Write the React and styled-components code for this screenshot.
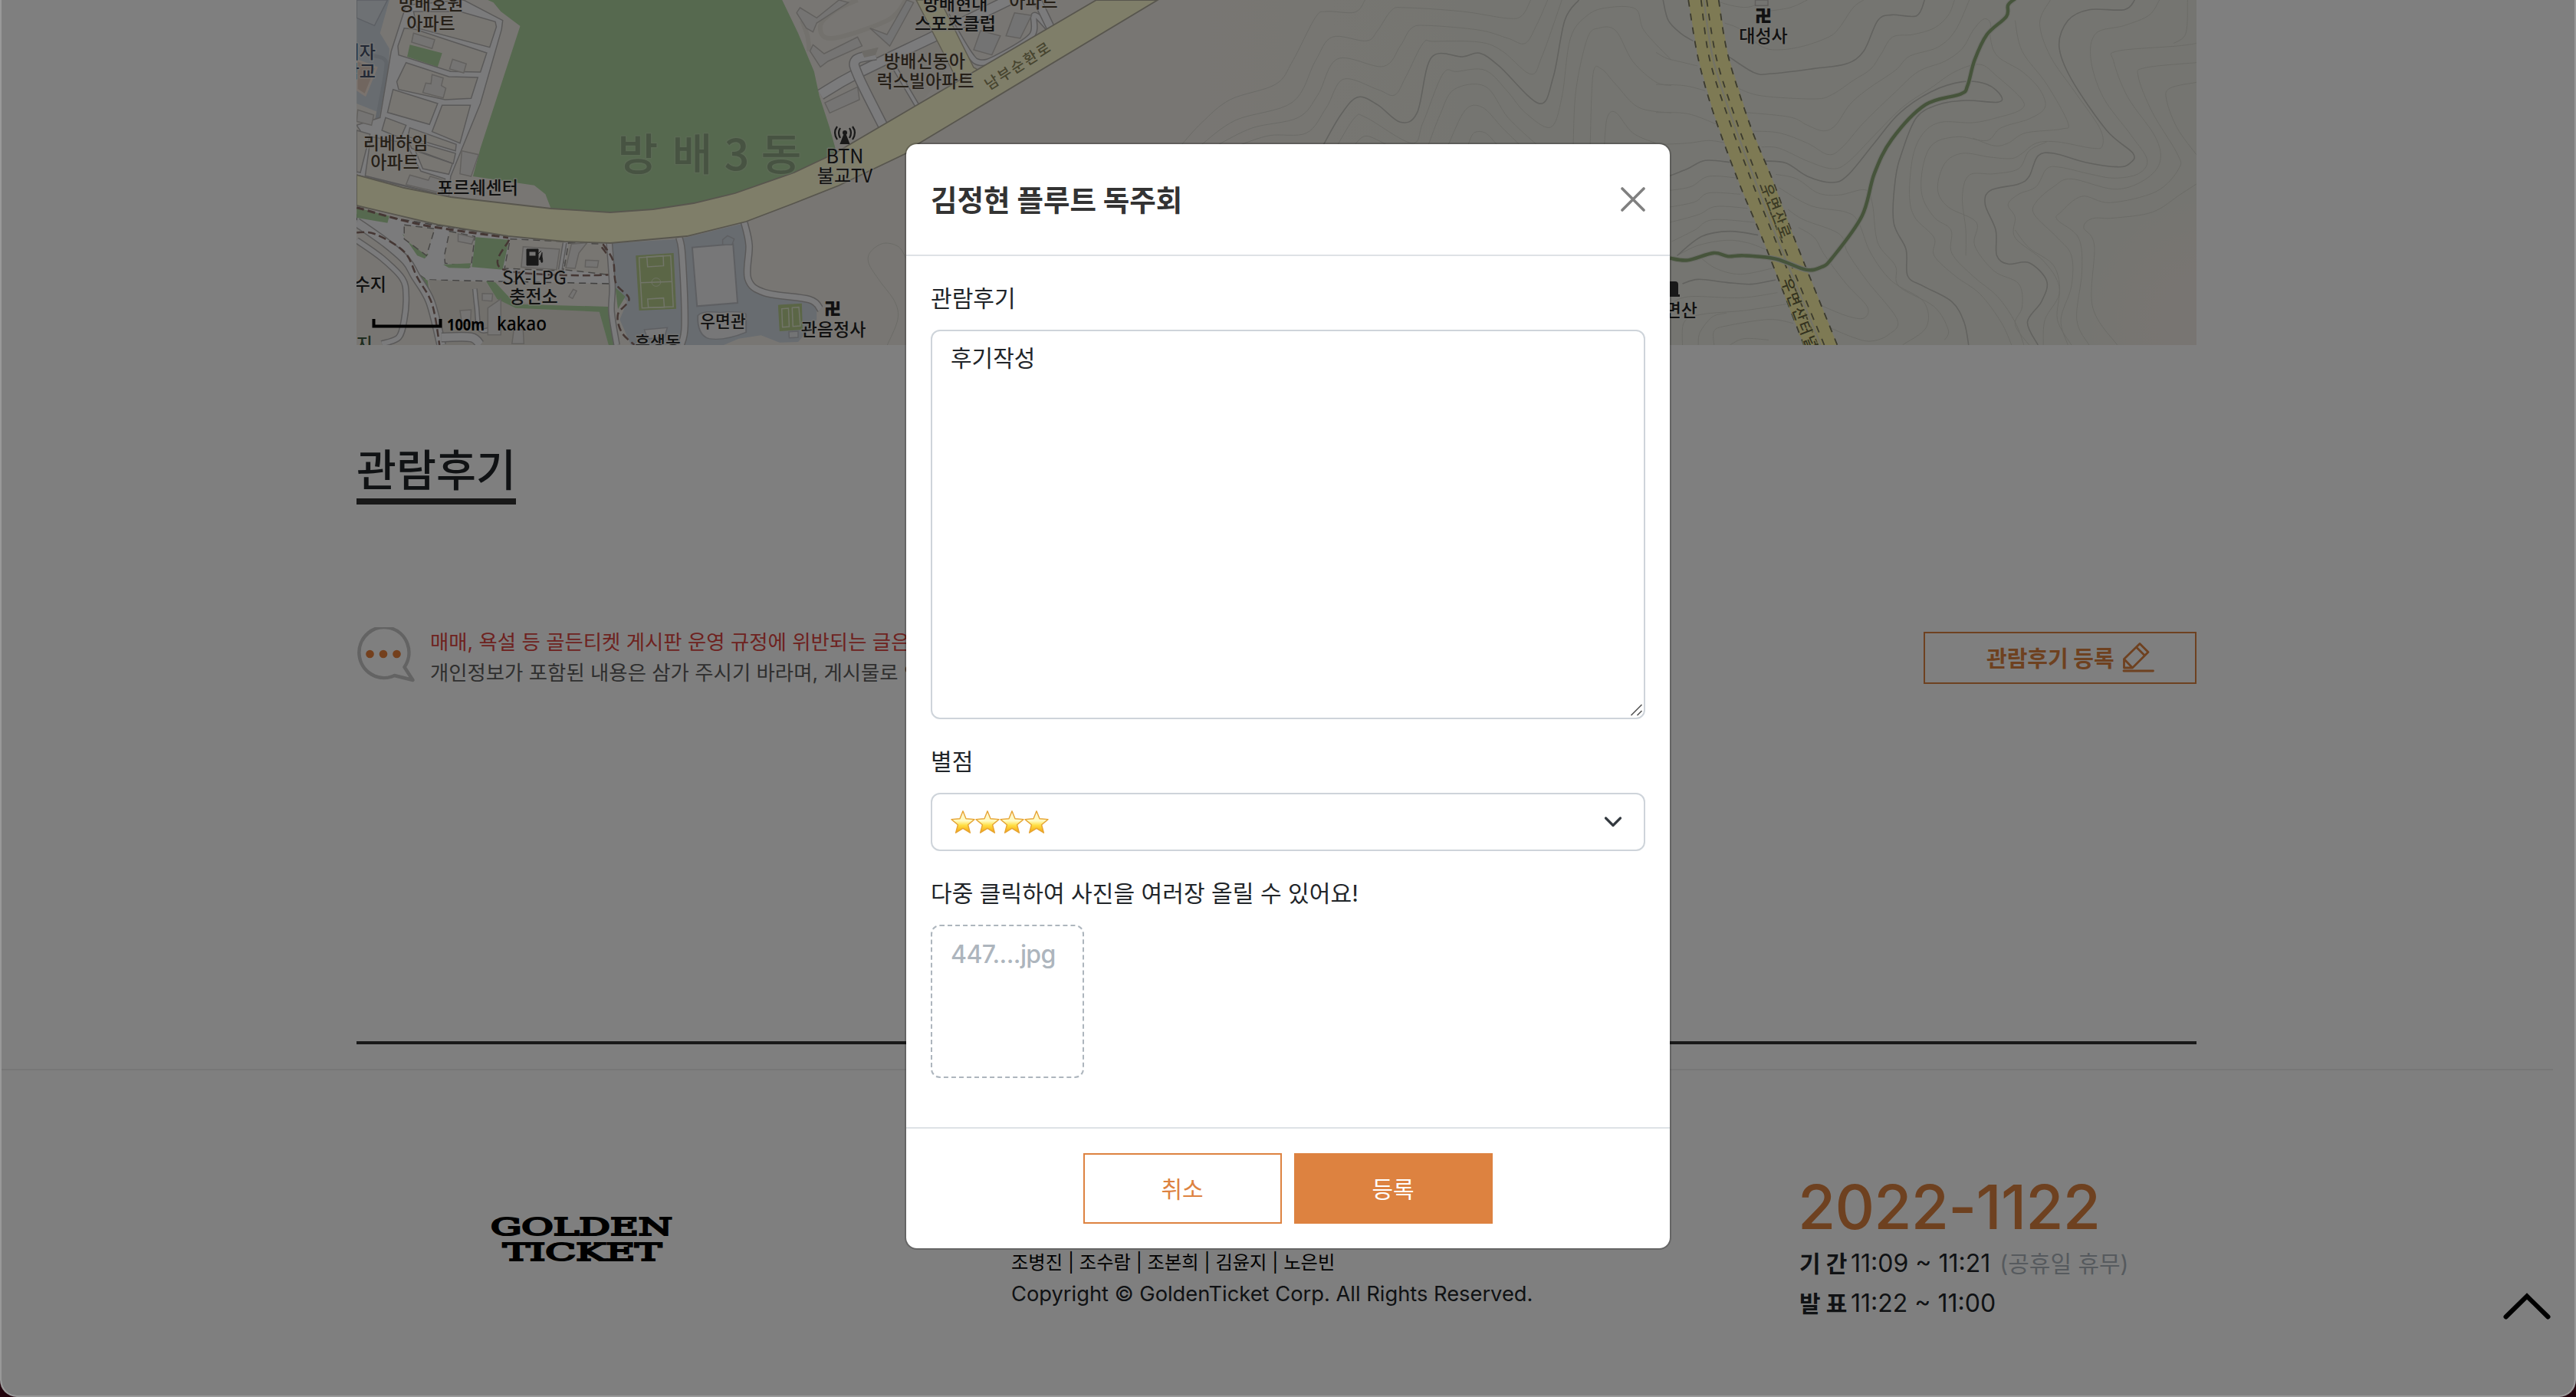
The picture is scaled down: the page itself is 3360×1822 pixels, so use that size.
import React from "react";
import styled, { createGlobalStyle } from "styled-components";

const GlobalStyle = createGlobalStyle`
  * { box-sizing: border-box; }
  body {
    margin: 0;
    background: #22030c;
    color: #212529;
    font-family: Inter, "Noto Sans CJK KR", sans-serif;
    overflow: hidden;
  }
`;

const ORANGE = "#dd8240";

/* ---------- window and page ---------- */

const Window = styled.div`
  position: relative;
  width: 3360px;
  height: 1822px;
  border: 2px solid #999;
  border-top: 0;
  border-radius: 0 0 22px 22px;
  overflow: hidden;
  background: #fff;
`;

const Page = styled.div`
  width: 3328px;
  height: 1820px;
  display: flex;
  flex-direction: column;
`;

const Content = styled.main`
  width: 2400px;
  margin-left: 463px;
  height: 1362px;
  display: flex;
  flex-direction: column;
  border-bottom: 4px solid #333;
`;

const Map = styled.svg`
  display: block;
  flex: none;
  width: 2400px;
  height: 450px;
  font-family: "Noto Sans CJK KR", sans-serif;
`;

const SectionTitle = styled.h3`
  align-self: flex-start;
  margin: 122px 0 0;
  height: 86px;
  width: 208px;
  border-bottom: 8px solid #333;
  font-size: 56.5px;
  line-height: 84px;
  font-weight: 500;
  white-space: nowrap;
`;

const NoticeRow = styled.div`
  display: flex;
  margin-top: 160px;
  height: 76px;
`;

const BubbleIcon = styled.svg`
  flex: none;
  width: 80px;
  height: 72px;
`;

const NoticeText = styled.div`
  flex: 1;
  margin: -1px 0 0 16px;
  font-size: 26.4px;
  line-height: 40px;
  white-space: nowrap;
  overflow: hidden;
`;

const NoticeLine = styled.div`
  color: ${(p) => (p.$warn ? "#dc4440" : "#5e5e5e")};
`;

const WriteButton = styled.button`
  flex: none;
  display: flex;
  align-items: center;
  justify-content: flex-start;
  gap: 10px;
  margin: 6px 0 0;
  width: 356px;
  height: 68px;
  padding: 0 0 2px 80px;
  border: 2.5px solid ${ORANGE};
  background: transparent;
  color: ${ORANGE};
  font-family: "Noto Sans CJK KR", sans-serif;
  font-size: 29px;
  font-weight: 700;
  white-space: nowrap;
`;

/* ---------- footer ---------- */

const Footer = styled.footer`
  margin-top: 32px;
  height: 426px;
  border-top: 2px solid #eee;
  display: flex;
`;

const Logo = styled.svg`
  flex: none;
  width: 250px;
  height: 70px;
  margin: 188px 0 0 631px;
  font-family: "DejaVu Serif", serif;
  font-weight: 400;
  stroke: #000;
  stroke-width: 2.2px;
`;

const Credits = styled.div`
  width: 700px;
  margin: 231px 0 0 436px;
  white-space: nowrap;
`;

const CreditNames = styled.p`
  margin: 0;
  height: 40px;
  line-height: 39px;
  font-size: 24.3px;
  color: #000;
`;

const Copyright = styled.p`
  margin: 0;
  line-height: 42px;
  font-size: 27.3px;
`;

const Schedule = styled.div`
  margin: 124px 0 0 328px;
  white-space: nowrap;
`;

const ScheduleCode = styled.div`
  height: 102px;
  line-height: 107px;
  margin-left: -2px;
  font-size: 80px;
  font-weight: 500;
  letter-spacing: -0.8px;
  color: ${ORANGE};
`;

const ScheduleRow = styled.div`
  display: flex;
  height: 52px;
  line-height: 52px;
  font-size: 32px;
`;

const ScheduleLabel = styled.b`
  width: 67px;
  font-size: 30px;
`;

const ScheduleNote = styled.span`
  margin-left: 12px;
  font-size: 30px;
  color: #adb5bd;
`;

const TopArrow = styled.svg`
  position: absolute;
  left: 3262px;
  top: 1683px;
  width: 64px;
  height: 42px;
`;

/* ---------- modal ---------- */

const Backdrop = styled.div`
  position: absolute;
  inset: 0;
  display: flex;
  justify-content: center;
  align-items: flex-start;
  padding-top: 186px;
  background: rgba(0, 0, 0, 0.5);
`;

const Dialog = styled.section`
  width: 1000px;
  height: 1444px;
  display: flex;
  flex-direction: column;
  background: #fff;
  background-clip: padding-box;
  border: 2px solid rgba(0, 0, 0, 0.2);
  border-radius: 16px;
`;

const DialogHeader = styled.header`
  display: flex;
  align-items: center;
  justify-content: space-between;
  height: 146px;
  padding: 0 32px;
  border-bottom: 2px solid #dee2e6;
`;

const DialogTitle = styled.h5`
  margin: 0 0 3px;
  font-size: 37.5px;
  font-weight: 700;
  color: #333;
`;

const DialogBody = styled.div`
  flex: 1;
  padding: 32px;
`;

const Label = styled.label`
  display: block;
  height: 48px;
  margin-bottom: 16px;
  font-size: 30.1px;
  line-height: 47px;
`;

const Field = styled.div`
  position: relative;
  height: ${(p) => p.$height}px;
  margin-bottom: 32px;
`;

const TextArea = styled.textarea`
  display: block;
  width: 100%;
  height: 100%;
  padding: 11px 24px;
  border: 2px solid #ced4da;
  border-radius: 12px;
  resize: none;
  outline: none;
  color: #212529;
  font-family: inherit;
  font-size: 30px;
  line-height: 48px;
`;

const Grip = styled.svg`
  position: absolute;
  right: 2px;
  bottom: 2px;
  width: 18px;
  height: 18px;
`;

const Select = styled.div`
  display: flex;
  align-items: center;
  justify-content: space-between;
  height: 100%;
  padding: 0 27px 0 24px;
  border: 2px solid #ced4da;
  border-radius: 12px;
`;

const Stars = styled.span`
  display: flex;
`;

const FileBox = styled.div`
  width: 200px;
  height: 200px;
  padding: 13px 24px;
  border: 2px dashed #adb5bd;
  border-radius: 12px;
  color: #adb5bd;
  font-size: 32px;
  font-weight: 500;
  line-height: 48px;
  letter-spacing: -0.6px;
`;

const DialogFooter = styled.footer`
  display: flex;
  justify-content: center;
  gap: 16px;
  height: 158px;
  padding: 32px;
  border-top: 2px solid #dee2e6;
`;

const ActionButton = styled.button`
  width: 259px;
  height: 92px;
  padding: 0 1px 3px 0;
  border: 2px solid ${ORANGE};
  background: ${(p) => (p.$primary ? ORANGE : "#fff")};
  color: ${(p) => (p.$primary ? "#fff" : ORANGE)};
  font-family: inherit;
  font-size: 30px;
`;

/* ---------- map ---------- */

// Catmull-Rom curve through a flat list of x,y pairs.
function smooth(str) {
  const n = str.trim().split(/[\s,]+/).map(Number);
  const p = [];
  for (let i = 0; i < n.length; i += 2) p.push([n[i], n[i + 1]]);
  let d = `M${p[0]}`;
  for (let i = 0; i < p.length - 1; i++) {
    const a = p[i - 1] || p[i];
    const b = p[i];
    const c = p[i + 1];
    const e = p[i + 2] || c;
    d += `C${b[0] + (c[0] - a[0]) / 6},${b[1] + (c[1] - a[1]) / 6} ${c[0] - (e[0] - b[0]) / 6},${c[1] - (e[1] - b[1]) / 6} ${c[0]},${c[1]}`;
  }
  return d;
}

const Line = ({ d, w = 1, c = "#d6d6ce", dash, o }) => (
  <path d={smooth(d)} fill="none" stroke={c} strokeWidth={w} strokeDasharray={dash} opacity={o} vectorEffect="non-scaling-stroke" strokeLinejoin="round" />
);

const Road = ({ d, w }) => (
  <>
    <Line d={d} w={w} c="#b5b3b2" />
    <Line d={d} w={w - 3} c="#f6f6f8" />
  </>
);

const Shape = ({ p, fill = "#f1ede5", stroke = "none", w = 1.5, dash }) => (
  <polygon points={p} fill={fill} stroke={stroke} strokeWidth={w} strokeDasharray={dash} vectorEffect="non-scaling-stroke" />
);

const Name = ({ x, y, size = 23, fill = "#222", anchor = "middle", halo = "#f4f2ec", weight = 500, ...rest }) => (
  <text x={x} y={y} fontSize={size} fill={fill} textAnchor={anchor} fontWeight={weight} stroke={halo} strokeWidth="3" strokeOpacity=".6" strokeLinejoin="round" paintOrder="stroke" {...rest} />
);

const PARK = "#acd29e";
const ROAD = "#fffcd2";
const CAMPUS = "#d0d8e1";

const westBlocks = [
  "205,45 330,45 425,85 428,105 410,185 215,110",
  "180,110 210,115 402,207 385,282 305,280 165,215 163,180",
  "185,245 300,300 378,303 360,385 290,390 165,350 160,320",
  "150,350 270,405 248,487 135,440",
  "282,412 358,412 330,560 255,515",
  "130,460 185,490 170,540 120,510",
  "195,500 320,565 318,590 190,535",
  "188,545 318,600 312,640 200,580",
  "210,590 310,640 300,682 230,660",
  "90,535 185,560 225,670 290,700 282,762 75,688",
  "52,510 88,525 62,675 52,672",
];

const buildings = [
  "205,130 262,155 255,190 200,165",
  "310,232 347,250 340,285 302,270",
  "255,292 285,305 280,335 292,345 285,383 230,362 238,325 252,328",
  "195,685 245,705 250,690 285,705 280,755 185,722",
  "335,590 380,605 360,690 330,680",
  "55,430 98,450 92,490 52,475",
  "1245,30 1290,70 1350,0 1375,10 1290,90 1280,125 1262,110 1236,50",
  "1280,175 1310,210 1400,145 1412,180 1320,240 1300,262 1272,200",
  "1400,340 1405,390 1325,442 1312,402",
  "325,915 368,930 362,955 325,945",
  "500,965 598,975 590,1055 495,1045",
  "630,955 672,950 650,990 640,1050 615,1048",
  "668,1018 703,1020 700,1046 667,1044",
  "635,1132 644,1138 633,1168 623,1160",
  "390,1148 418,1150 416,1178 390,1175",
  "330,1215 360,1212 358,1270 335,1262",
  "405,1205 440,1170 440,1310 405,1310",
  "475,1290 500,1290 502,1345 470,1345",
];

const westBlocksSouth = [
  "180,880 262,895 240,1000 180,935",
  "302,905 370,925 360,1045 290,1030 288,1000",
  "465,935 610,945 608,1060 450,1050",
  "622,950 715,955 735,1020 730,1075 610,1055",
];

// Contours of the eastern hill, in the east sheet's own grid.
const eastContours = [
  "0,205 30,228 70,242 118,258", "195,90 240,115 300,182 350,195 420,180 490,145 520,110 560,30 590,0", "165,0 210,20 262,28 310,0",
  "310,45 380,30 430,0", "0,330 80,335 140,355", "232,345 300,375 450,387 500,370 560,315 610,270 640,210 672,145 730,135 790,110 830,60 848,0",
  "0,440 90,445 170,485", "255,440 380,458 430,490 475,512 510,490 550,410 600,350 680,275 720,220 800,185 850,120 890,0",
  "270,513 350,520 430,560 490,605 530,575 590,480 680,360 745,280 820,240 870,190 900,120 930,75 950,90 950,150 970,220 1040,280 1090,350 1105,420 1060,465 980,500 940,550 860,535 790,560 760,640 755,760 790,850 838,900 840,990 900,1080 970,1160 1020,1260 1045,1350",
  "0,566 90,560 150,550 200,560", "300,575 350,580 430,630 500,660 545,635 620,530 700,420 780,345 850,280 920,252 970,300 1040,390 1035,430 970,460 900,480 810,478 760,520 730,610 720,760 735,850 790,930 790,1000 850,1080 920,1150 980,1260 1010,1350",
  "40,745 100,730 150,690 240,698", "340,682 400,700 460,755 520,763 595,743 615,800 630,950 680,1040 690,1120 790,1200 830,1290 820,1330",
  "40,810 110,790 150,755 240,760", "350,735 440,805 540,830 575,870 610,990 670,1100 760,1180 768,1280 700,1350",
  "40,870 120,840 170,808 260,815", "375,820 420,860 520,915 545,990 600,1100 685,1250 660,1310 610,1335 560,1320 490,1280",
  "45,945 110,900 160,860 280,870", "405,890 450,930 480,1000 540,1110 600,1200 590,1245 540,1235 460,1190",
  "60,1000 120,960 200,940 260,950 310,975", "120,1000 170,1050 240,1073 330,1050", "50,1180 100,1160 240,1165 345,1145",
  "75,1350 80,1260 130,1230 250,1215 370,1190", "120,1350 125,1300 160,1240 200,1225", "165,1350 165,1295 200,1275 320,1250 390,1265", "210,1350 250,1325 320,1330",
  "1120,0 1090,90 1120,220 1190,360 1260,500 1268,570 1240,580 1140,555 1080,560 1040,600 1010,620 950,615 870,600 820,640 800,740 830,810 910,870 905,960 960,1060 1030,1110 1040,1200 1020,1270 1060,1350",
  "1020,80 1040,200 1110,330 1170,480 1150,505 1050,520 1000,560 960,570 900,540",
  "1180,1350 1140,1250 1145,1120 1100,1020 1020,930 1020,850 1000,800 1030,760 1080,730 1110,660 1150,655 1230,680 1300,697 1370,680 1395,625 1350,530 1270,380 1235,230 1250,130 1330,100 1400,60 1430,0",
  "1100,1350 1105,1250 1145,1150 1130,1040 1060,970 1020,900", "880,1000 880,900 870,770 890,685 960,680 1030,660 1060,590 1110,555",
  "1535,170 1480,180 1310,200 1300,240 1340,380 1420,540 1430,640 1380,710 1300,740 1180,700 1130,730 1080,790 1075,840 1140,930 1180,1000 1180,1120 1150,1250 1170,1350",
  "1535,245 1390,265 1370,300 1410,440 1480,600 1485,660 1420,750 1290,793 1210,768 1150,830 1140,860 1200,930 1210,1060 1195,1250 1230,1350",
  "1535,322 1460,345 1450,390 1480,500 1535,605", "1535,720 1490,760 1410,830 1300,853 1240,855 1215,890 1245,960 1240,1200 1310,1350", "1510,0 1505,130 1470,170",
];

const eastMajorContours = [
  "20,0 35,80 70,130 105,160", "205,220 280,285 330,288 450,268 540,250 590,200 630,80 670,58 740,62 763,0",
  "40,688 90,660 140,628 210,635", "310,630 370,638 430,690 500,714 545,685 620,560 690,445 780,360 870,320 940,330 980,375 970,400 880,393 800,410 740,460 700,590 680,700 675,870 710,975 715,1080 760,1120 840,1180 875,1260 888,1350",
  "1360,0 1330,38 1230,38 1170,80 1145,180 1180,310 1280,510 1355,600 1345,640 1310,653 1220,635 1130,600 1085,610 1060,690 1030,720 950,745 935,800 965,900 968,1000 1000,1033 1060,1028 1110,1100 1095,1180 1055,1260 1085,1350",
  "60,1000 130,925 210,905 290,920", "75,1110 120,1093 200,1105 270,1112 340,1095",
];

const midContours = [
  "705,565 740,480 790,390 870,330 900,240 940,70 960,45 1010,48 1028,0", "740,565 800,470 900,400 940,240 970,145 1030,160 1050,120 1075,40 1100,30 1200,45 1280,72 1305,60 1320,0",
  "770,565 830,500 910,460 945,370 980,230 1060,260 1090,180 1110,110 1140,100 1230,118 1280,150 1310,170 1330,100 1350,0",
  "810,565 860,530 925,520 960,420 990,310 1050,350 1080,372 1100,300 1130,170 1150,162 1230,165 1270,200 1320,290 1340,220 1375,0",
  "980,565 1010,460 1030,460 1110,560 1130,480 1165,290 1190,280 1240,275 1280,360 1310,440 1355,498 1375,380 1390,150 1420,60 1455,30 1505,35 1520,120 1568,235",
  "1010,565 1030,532 1065,565", "1140,565 1160,450 1185,350 1240,338 1280,460 1330,565", "1175,565 1205,430 1235,420 1270,500 1300,565", "1210,565 1220,520 1240,520 1260,565",
  "1395,565 1400,350 1420,150 1440,110 1470,120 1500,240 1540,320 1568,335", "1425,565 1430,290 1445,270 1470,330 1510,420 1568,442", "1450,565 1455,460 1470,440 1500,520 1540,560",
];

function KakaoMap() {
  return (
    <Map viewBox="0 0 2400 450">
      <defs>
        <linearGradient id="hill" x1="0" x2="1">
          <stop offset="0" stopColor="#f1ede6" />
          <stop offset=".46" stopColor="#f1ede6" />
          <stop offset=".6" stopColor="#ebebe2" />
          <stop offset="1" stopColor="#ebebe2" />
        </linearGradient>
        <radialGradient id="warm">
          <stop offset=".4" stopColor="#f1ebe4" />
          <stop offset="1" stopColor="#f1ebe4" stopOpacity="0" />
        </radialGradient>
      </defs>
      <rect width="2400" height="450" fill="url(#hill)" />
      <circle cx="2420" cy="420" r="160" fill="url(#warm)" />

      {/* west sheet */}
      <g transform="translate(-25 0) scale(.4847 .33333)">
        <Shape p="52,0 140,0 115,130 140,190 138,300 112,440 52,405" fill={CAMPUS} />
        <Shape p="52,0 135,0 100,100 52,70" fill="#dde2e8" stroke="#b9bfc8" />
        <Shape p="52,235 105,265 75,372 52,350" fill="#e2cdbf" stroke="#f4e6dc" w={3} />
        <Line d="80,215 125,230 130,280 105,480" w={5} c="#c3cbd3" />
        <Shape p="185,20 340,0 445,80 442,115 385,405 305,690 300,768 50,684 75,540 52,490 115,460 145,200" fill="#f6f6f8" stroke="#b5b3b2" />
        {westBlocks.map((p) => <Shape key={p} p={p} stroke="#b5b3b2" />)}
        <Shape p="195,175 282,208 270,262 188,222" fill={PARK} />
        <Shape p="405,0 420,10 440,45 492,102 385,580 365,690 530,725 560,760 575,817 735,832 850,822 960,797 1070,757 1230,676 1345,605 1325,500 1297,375 1283,280 1240,130 1197,0" fill={PARK} />
        <Line d="1250,80 1265,140 1270,200" w={6} c="#e6e2da" />
        <Line d="1530,0 1480,80 1330,150 1300,100 1340,40 1400,0" w={6} c="#e6e2da" />

        <Shape p="52,840 140,850 262,880 460,925 735,950 745,1070 735,1110 240,1095 205,1060 140,950 52,870" fill="#f6f6f8" stroke="#7f7d7c" dash="9 6" />
        <Shape p="52,812 140,845 135,872 52,852" fill={PARK} />
        <Shape p="175,915 245,995 235,1012 215,1000" fill={PARK} />
        {westBlocksSouth.map((p) => <Shape key={p} p={p} stroke="#8f8c89" dash="9 6" />)}
        <Shape p="372,928 462,938 445,1055 362,1045" fill={PARK} />
        <Shape p="285,1035 360,1030 355,1050 300,1048" fill={PARK} />
        <Shape p="245,1095 400,1105 430,1170 705,1220 730,1350 285,1350" fill="#e4e0d8" />
        <Shape p="205,1058 243,1098 252,1190 280,1350 262,1290 230,1150" fill={PARK} />
        <Shape p="400,1100 425,1105 480,1190 730,1200 755,1350 730,1350 705,1220 480,1205 430,1170" fill={PARK} />
        <Line d="52,812 230,880 460,930" w={3} c="#8a6f68" dash="10 5" />
        <Line d="462,938 448,1055 730,1075 735,1020 705,955" w={2.5} c="#8a6f68" dash="10 5" />
        <Road d="52,870 130,950 185,1020 210,1080 250,1180 280,1350" w={13} />
        <Line d="52,910 100,915 180,985 215,1085 255,1190 275,1350" w={2.5} c="#8a6f68" dash="10 5" />
        <Road d="52,940 120,1010 175,1090 185,1160 180,1250 165,1320 120,1345" w={9} />
        <Road d="280,1320 360,1320 385,1350" w={13} />
        <Road d="370,1130 375,1200 385,1290 430,1280" w={7} />
        <Road d="612,950 600,1055" w={6} />

        <Shape p="738,952 920,935 1090,875 1100,960 1108,1120 1150,1160 1290,1185 1290,1250 1240,1338 1190,1340 1140,1312 1080,1325 1040,1350 790,1350 760,1250 780,1180 750,1130" fill={CAMPUS} />
        <Shape p="748,1125 775,1160 755,1210" fill={PARK} />
        <Road d="732,950 740,1120 738,1220 752,1350" w={9} />
        <Line d="715,955 742,1020 750,1110 785,1170 755,1230 765,1300 800,1350" w={2.5} c="#8a6f68" dash="10 5" />
        <Road d="920,930 928,1000 935,1270 925,1350" w={10} />
        <Road d="1095,870 1108,960 1105,1090 1150,1145 1270,1172 1300,1210" w={10} />
        <Shape p="803,1000 905,990 912,1208 812,1215" fill="#b6cc8c" />
        <Shape p="812,1008 897,1000 904,1200 820,1205" fill="none" stroke="#e4ead2" />
        <Shape p="833,1005 877,1001 878,1040 835,1044" fill="none" stroke="#e4ead2" />
        <Shape p="835,1170 878,1166 880,1202 837,1204" fill="none" stroke="#e4ead2" />
        <Line d="815,1106 901,1102" w={1.5} c="#e4ead2" />
        <ellipse cx="858" cy="1104" rx="12" ry="16" fill="none" stroke="#e4ead2" strokeWidth="2" />
        <Shape p="955,968 1065,955 1077,1185 968,1198" fill="#eeeef0" stroke="#bcbfc4" w={2} />
        <Shape p="1037,938 1050,922 1068,935 1062,958 1037,958" fill={CAMPUS} stroke="#bcbfc4" />
        <path d="M970,1235Q980,1215 1030,1222Q1095,1215 1100,1230L1100,1300Q1040,1335 1000,1325Q968,1310 970,1235Z" fill="#eeeef0" stroke="#bcbfc4" strokeWidth="4" />
        <Shape p="1186,1193 1250,1187 1252,1290 1190,1296" fill="#b6cc8c" />
        <Shape p="1196,1208 1214,1206 1216,1278 1198,1280" fill="none" stroke="#e4ead2" />
        <Shape p="1224,1204 1242,1202 1246,1275 1226,1277" fill="none" stroke="#e4ead2" />
        <Shape p="1215,1298 1240,1296 1240,1320 1216,1322" fill="#e6e8ea" stroke="#bcbfc4" />
        <Shape p="826,1290 888,1282 880,1320 835,1325" fill="#eeeef0" stroke="#bcbfc4" />
        {buildings.map((p) => <Shape key={p} p={p} fill="#ebe9e6" stroke="#c4c1bd" />)}
        <Line d="1530,1010 1510,965 1470,952 1435,985 1430,1030 1460,1100 1500,1180 1508,1250 1480,1350" />
      </g>

      {/* central sheet */}
      <g transform="translate(555 0) scale(.7398 .33333)">
        <Shape p="130,300 290,130 300,240 240,420 180,500" fill="#ece8e0" />
        <Road d="68,370 130,290 275,135 400,0" w={15} />
        <Road d="165,215 130,235 135,300 180,500" w={14} />
        <Road d="200,270 240,420" w={7} />
        <Road d="290,60 330,210 350,245 380,225 440,140 445,60 470,110" w={9} />
        <Road d="450,0 475,115" w={12} />
        <Shape p="410,50 440,60 420,150 395,140" fill="#e6e6e6" stroke="#c4c1bd" />
        <Shape p="350,120 385,140 370,215 338,195" fill="#e6e6e6" stroke="#c4c1bd" />
        <Shape p="155,110 185,135 220,0 232,10 205,120 190,180" fill="#e6e6e6" stroke="#c4c1bd" />
        <Shape p="140,200 170,185 165,215 145,225" fill="#dad6ce" />
      </g>
      <path d="M730,0H761L805,88L824,99L790,118L766,70Z" fill={ROAD} stroke="#bbb6a0" strokeWidth="1.5" />
      <path
        d="M0,228L62,245L123,257L254,272L331,277L387,273L440,265L494,252L571,225L624,200L644,188L965,0H1045L732,188L717,200L629,242L571,265L508,289L431,308L331,317L271,315L198,308L106,293L0,268Z"
        fill={ROAD}
        stroke="#b0ac9c"
        strokeWidth="1.8"
      />
      <g transform="translate(555 0) scale(.7398 .33333)">
        {midContours.map((d) => <Line key={d} d={d} />)}
        <Line d="955,565 985,450 1015,380 1050,410 1090,478 1120,440 1145,225 1200,222 1230,208 1265,260 1335,405 1360,300 1380,80 1405,0" w={1.6} c="#c4c4be" />
      </g>

      {/* east sheet */}
      <g transform="translate(1695 0) scale(.4592 .33333)">
        {eastContours.map((d) => <Line key={d} d={d} />)}
        {eastMajorContours.map((d) => <Line key={d} d={d} w={1.6} c="#c4c4be" />)}
        <Shape p="92,0 120,230 165,450 240,730 310,960 420,1350 515,1350 395,940 330,700 270,500 205,220 178,0" fill="#fcf5a8" />
        <Line d="136,0 162,230 215,460 285,720 352,960 468,1350" w={2.4} c="#e8e6cc" />
        {["92,0 120,230 165,450 240,730 310,960 420,1350", "178,0 205,220 270,500 330,700 395,940 515,1350", "128,0 152,230 205,460 275,720 345,960 460,1350", "144,0 172,230 225,460 295,720 362,960 478,1350"].map((d) => (
          <Line key={d} d={d} w={1.8} c="#77755c" dash="9 9" />
        ))}
        <Shape p="282,0 318,0 318,22 282,22" fill="#e8e8e2" stroke="#c4c1bd" />
        {[["#dcded4", 7], ["#8ca876", 4.4]].map(([c, w]) => (
          <Line key={c} w={w} c={c} d="1020,-5 1000,20 995,65 940,135 905,235 885,335 865,368 765,410 670,545 620,680 585,845 500,1010 470,1045 425,1055 340,1013 250,1000 205,1003 163,990 90,1018 40,1010" />
        ))}
      </g>

      {/* place names */}
      <Name x="97" y="13" fill="#4d4030">방배호원</Name>
      <Name x="97" y="39" fill="#4d4030">아파트</Name>
      <Name x="25" y="76" fill="#44516a" anchor="end">여자</Name>
      <Name x="25" y="101" fill="#44516a" anchor="end">학교</Name>
      <Name x="51" y="195" fill="#4d4030">리베하임</Name>
      <Name x="50" y="220" fill="#4d4030">아파트</Name>
      <Name x="158" y="253">포르쉐센터</Name>
      {[["방", 367], ["배", 438], ["3", 496], ["동", 554]].map(([t, x]) => (
        <Name key={t} x={x} y="222" size="57" weight="500" fill="#8ea684" halo="#bcd6b0">{t}</Name>
      ))}
      <Name x="637" y="213" size="25" weight="400">BTN</Name>
      <Name x="637" y="238" size="24" weight="400">불교TV</Name>
      <g fill="none" stroke="#333" strokeWidth="2.2">
        <path d="M631,167Q627,173 631,180M643,167Q647,173 643,180M627,165Q621,173 627,182M647,165Q653,173 647,182" />
        <path d="M637,174L632,187H642Z" fill="#333" />
        <circle cx="637" cy="173" r="3" fill="#333" stroke="none" />
      </g>
      <path d="M222,325H237V346H222ZM225,328V334H234V328ZM237,331L241,327M238,338Q241,338 241,342Q244,344 242,335V329" fill="#333" fillRule="evenodd" stroke="#333" />
      <Name x="232" y="371" size="24.5" weight="400">SK-LPG</Name>
      <Name x="231" y="395">충전소</Name>
      <Name x="39" y="379" anchor="end">수지</Name>
      <Name x="21" y="457" anchor="end" fill="#3f5a40">지</Name>
      <Name x="478" y="427" size="21.5">우면관</Name>
      <Name x="393" y="454" size="21.5">후생동</Name>
      <Name x="622" y="438">관음정사</Name>
      <Name x="621" y="410" size="21" weight="700" fill="#222" stroke="#222" strokeWidth="1.2" strokeOpacity="1">卍</Name>
      <Name x="781" y="13">방배현대</Name>
      <Name x="781" y="39">스포츠클럽</Name>
      <Name x="883" y="10" fill="#4d4030">아파트</Name>
      <Name x="741" y="88" fill="#4d4030">방배신동아</Name>
      <Name x="742" y="114" fill="#4d4030">럭스빌아파트</Name>
      <Name x="0" y="0" size="19" anchor="start" fill="#8f8a5f" halo={ROAD} letterSpacing="2.4" transform="translate(825 118) rotate(-32.5)">남부순환로</Name>
      <Name x="1835" y="55">대성사</Name>
      <Name x="1835" y="28" size="21" weight="700" fill="#222" stroke="#222" strokeWidth="1.2" strokeOpacity="1">卍</Name>
      <Name x="1749" y="413" anchor="end">우면산</Name>
      <path d="M1700,387V371Q1700,367 1705,367H1720Q1724,367 1724,371V384H1726V387Z" fill="#333" />
      <Name x="0" y="0" size="18.5" anchor="start" fill="#77744a" halo="#fcf5a8" letterSpacing="2" transform="translate(1832 243) rotate(69)">우면산로</Name>
      <Name x="0" y="0" size="19" anchor="start" fill="#66643e" halo="#fcf5a8" letterSpacing="2.6" transform="translate(1858 366) rotate(69)">우면산터널</Name>

      <path d="M22.5,416V425.5H109.5V416" fill="none" stroke="#000" strokeWidth="4" />
      <text x="118" y="431" fontSize="21" fontWeight="700" textLength="49" lengthAdjust="spacingAndGlyphs" fontFamily="Noto Sans">100m</text>
      <text x="183" y="431" fontSize="25" fontWeight="500" textLength="65" lengthAdjust="spacingAndGlyphs" fontFamily="Noto Sans">kakao</text>
    </Map>
  );
}

/* ---------- small drawings ---------- */

const Star = () => (
  <svg width="32" height="32" viewBox="0 0 32 32">
    <defs>
      <linearGradient id="star" x1="0" y1="0" x2="0" y2="1">
        <stop offset="0" stopColor="#fff3d0" />
        <stop offset=".45" stopColor="#fffbc0" />
        <stop offset=".65" stopColor="#ffdf45" />
        <stop offset="1" stopColor="#f6a008" />
      </linearGradient>
    </defs>
    <path d="M16,1.8L20,11.8L31,12.6L22.6,19.8L25.4,30.2L16,24.4L6.6,30.2L9.4,19.8L1,12.6L12,11.8Z" fill="url(#star)" stroke="#e6a434" strokeWidth="1.4" strokeLinejoin="round" />
  </svg>
);

const PencilIcon = styled.svg`
  flex: none;
  width: 42px;
  height: 40px;
`;

export default function App() {
  return (
    <>
      <GlobalStyle />
      <Window>
        <Page>
          <Content>
            <KakaoMap />
            <SectionTitle>관람후기</SectionTitle>
            <NoticeRow>
              <BubbleIcon viewBox="1.5 0 80 72">
                <path d="M64,52A32.5,33 0 1 0 51,63L75,69Z" fill="none" stroke="#c6c6c6" strokeWidth="4.5" strokeLinejoin="round" />
                <g fill="#e8803a">
                  <circle cx="19" cy="35" r="5.3" />
                  <circle cx="36.500" cy="35" r="5.3" />
                  <circle cx="54" cy="35" r="5.3" />
                </g>
              </BubbleIcon>
              <NoticeText>
                <NoticeLine $warn>매매, 욕설 등 골든티켓 게시판 운영 규정에 위반되는 글은</NoticeLine>
                <NoticeLine>개인정보가 포함된 내용은 삼가 주시기 바라며, 게시물로 인해</NoticeLine>
              </NoticeText>
              <WriteButton>
                관람후기 등록
                <PencilIcon viewBox="0 0 42 40" fill="none" stroke={ORANGE} strokeWidth="2.8" strokeLinejoin="round" strokeLinecap="round">
                  <path d="M2.5,34V22.5L23,2.5L34,13.5L13.5,34ZM2.5,22.5L13.5,34M18.5,7L29.5,18" />
                  <path d="M2,38H40.5" />
                </PencilIcon>
              </WriteButton>
            </NoticeRow>
          </Content>
          <Footer>
            <Logo viewBox="0 0 250 70">
              <text x="7" y="27" fontSize="31" textLength="237" lengthAdjust="spacingAndGlyphs">GOLDEN</text>
              <text x="23" y="60" fontSize="31" textLength="207" lengthAdjust="spacingAndGlyphs">TICKET</text>
            </Logo>
            <Credits>
              <CreditNames>조병진 | 조수람 | 조본희 | 김윤지 | 노은빈</CreditNames>
              <Copyright>Copyright © GoldenTicket Corp. All Rights Reserved.</Copyright>
            </Credits>
            <Schedule>
              <ScheduleCode>2022-1122</ScheduleCode>
              <ScheduleRow>
                <ScheduleLabel>기 간</ScheduleLabel>
                11:09 ~ 11:21
                <ScheduleNote>(공휴일 휴무)</ScheduleNote>
              </ScheduleRow>
              <ScheduleRow>
                <ScheduleLabel>발 표</ScheduleLabel>
                11:22 ~ 11:00
              </ScheduleRow>
            </Schedule>
          </Footer>
        </Page>
        <TopArrow viewBox="0 0 64 42">
          <path d="M4.5,34.5L32,7.5L59.5,34.5" fill="none" stroke="#000" strokeWidth="6" strokeLinecap="round" />
        </TopArrow>
        <Backdrop>
          <Dialog>
            <DialogHeader>
              <DialogTitle>김정현 플루트 독주회</DialogTitle>
              <svg width="32" height="32" viewBox="0 0 32 32">
                <path d="M2,2L30,30M30,2L2,30" stroke="#808080" strokeWidth="3.6" strokeLinecap="round" />
              </svg>
            </DialogHeader>
            <DialogBody>
              <Label>관람후기</Label>
              <Field $height={508}>
                <TextArea defaultValue="후기작성" spellCheck={false} />
                <Grip viewBox="0 0 18 18">
                  <path d="M1.5,15L15.5,1M9.5,15L15.5,9" stroke="#555" strokeWidth="1.6" />
                </Grip>
              </Field>
              <Label>별점</Label>
              <Field $height={76}>
                <Select>
                  <Stars>
                    <Star />
                    <Star />
                    <Star />
                    <Star />
                  </Stars>
                  <svg width="26" height="16" viewBox="0 0 26 16">
                    <path d="M3.5,3L13,12.5L22.5,3" fill="none" stroke="#343a40" strokeWidth="3.2" strokeLinecap="round" strokeLinejoin="round" />
                  </svg>
                </Select>
              </Field>
              <Label>다중 클릭하여 사진을 여러장 올릴 수 있어요!</Label>
              <FileBox>447....jpg</FileBox>
            </DialogBody>
            <DialogFooter>
              <ActionButton>취소</ActionButton>
              <ActionButton $primary>등록</ActionButton>
            </DialogFooter>
          </Dialog>
        </Backdrop>
      </Window>
    </>
  );
}
